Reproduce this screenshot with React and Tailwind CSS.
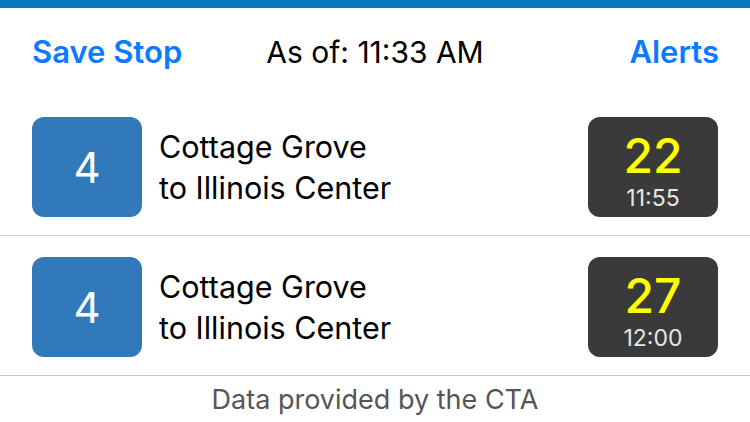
import React from "react";

const rows = [
  { route: "4", l1: "Cottage Grove", l2: "to Illinois Center", min: "22", time: "11:55" },
  { route: "4", l1: "Cottage Grove", l2: "to Illinois Center", min: "27", time: "12:00" },
];

export default function App() {
  return (
    <div className="w-[750px] h-[422px] bg-white overflow-hidden" style={{ fontFamily: "Inter, 'Liberation Sans', sans-serif" }}>
      <div className="h-[8px] bg-[#0a78be]" />
      <div className="h-[88px] pl-8 pr-[31px] flex items-center">
        <span className="text-[31px] font-semibold text-[#0a7aff]">Save Stop</span>
        <span className="text-[30px] text-black ml-[84px]">As of: 11:33 AM</span>
        <span className="ml-auto text-[31px] font-semibold text-[#0a7aff]">Alerts</span>
      </div>
      {rows.map((r, i) => (
        <div key={i} className="pl-8 pr-8 pt-[21px] pb-[18px] border-b border-[#c8c8c8] flex items-center">
          <div className="w-[110px] h-[100px] rounded-[12px] bg-[#3179bb] flex items-center justify-center text-white text-[42px]">
            {r.route}
          </div>
          <div className="ml-[17px] flex-1 text-[30.5px] leading-[41px] text-black">
            <div>{r.l1}</div>
            <div>{r.l2}</div>
          </div>
          <div className="w-[130px] h-[100px] rounded-[12px] bg-[#3a3a3a] flex flex-col items-center pt-[15px]">
            <div className="text-[48px] leading-[48px] font-medium text-[#ffff00]">{r.min}</div>
            <div className="mt-[6px] text-[23px] leading-[24px] text-[#e6e6e6]">{r.time}</div>
          </div>
        </div>
      ))}
      <div className="h-[46px] pt-[2px] flex items-center justify-center text-[27px] text-[#555555]">
        Data provided by the CTA
      </div>
    </div>
  );
}
